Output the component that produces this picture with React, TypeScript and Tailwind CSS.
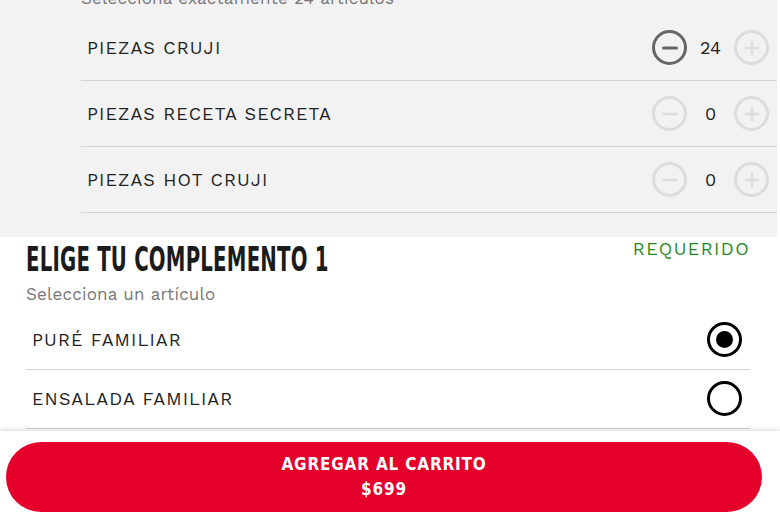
import { Minus, Plus } from "lucide-react";

type Piece = { name: string; qty: number };

const pieces: Piece[] = [
    { name: "PIEZAS CRUJI", qty: 24 },
    { name: "PIEZAS RECETA SECRETA", qty: 0 },
    { name: "PIEZAS HOT CRUJI", qty: 0 },
];

const sides = [
    { name: "PURÉ FAMILIAR", selected: true },
    { name: "ENSALADA FAMILIAR", selected: false },
];

const bodyFont = { fontFamily: '"Work Sans", "Noto Sans", "Open Sans", sans-serif' };
const condensedFont = {
    fontFamily: '"Liberation Sans Narrow", "DejaVu Sans Condensed", sans-serif',
};

function RoundButton({
    kind,
    active,
}: {
    kind: "minus" | "plus";
    active: boolean;
}) {
    const Icon = kind === "minus" ? Minus : Plus;
    return (
        <button
            className={`flex h-[35px] w-[35px] items-center justify-center rounded-full border-[3px] ${
                active
                    ? "border-[#666] text-[#666]"
                    : "border-[#dcdcdc] text-[#dcdcdc]"
            }`}
        >
            <Icon size={22} strokeWidth={active ? 3.5 : 2.5} />
        </button>
    );
}

function Counter({ qty }: { qty: number }) {
    // the total is already reached, so only "minus" is usable on a filled row
    return (
        <div className="flex items-center">
            <RoundButton kind="minus" active={qty > 0} />
            <span className="w-[47px] text-center text-[18px] text-[#222]">
                {qty}
            </span>
            <RoundButton kind="plus" active={false} />
        </div>
    );
}

function Radio({ checked }: { checked: boolean }) {
    return (
        <span className="flex h-[35px] w-[35px] items-center justify-center rounded-full border-[3px] border-black">
            {checked && <span className="h-[17px] w-[17px] rounded-full bg-black" />}
        </span>
    );
}

export default function App() {
    return (
        <div className="relative h-[522px] w-[780px] overflow-hidden bg-white" style={bodyFont}>
            {/* Chicken pieces picker */}
            <section className="mr-[3px] bg-[#f2f2f2] pb-[24px] pl-[81px]">
                <p className="-mt-[12px] text-[17px] leading-[20px] tracking-[0.2px] text-[#777]">
                    Selecciona exactamente 24 artículos
                </p>
                <ul className="mt-[7px]">
                    {pieces.map((p) => (
                        <li
                            key={p.name}
                            className="flex h-[66px] items-center justify-between border-b border-[#d4d4d4] pl-[6px] pr-[8px]"
                        >
                            <span className="text-[18px] tracking-[1.1px] text-[#222]">
                                {p.name}
                            </span>
                            <Counter qty={p.qty} />
                        </li>
                    ))}
                </ul>
            </section>

            {/* Side dish choice */}
            <section className="px-[26px] pr-[30px] pt-[1px]">
                <div className="flex items-start justify-between">
                    <h2
                        className="origin-left scale-x-[0.665] whitespace-nowrap text-[33px] font-bold leading-[44px] tracking-[0.3px] text-[#1b1b1b]"
                        style={condensedFont}
                    >
                        ELIGE TU COMPLEMENTO 1
                    </h2>
                    <span className="-mt-[3px] text-[18px] tracking-[1.4px] text-[#1f8a1f]">
                        REQUERIDO
                    </span>
                </div>
                <p className="text-[17px] tracking-[0.2px] text-[#777]">
                    Selecciona un artículo
                </p>
                <ul className="mt-[3px]">
                    {sides.map((s) => (
                        <li
                            key={s.name}
                            className="flex h-[59px] items-center justify-between border-b border-[#d4d4d4] pl-[6px] pr-[8px]"
                        >
                            <span className="text-[18px] tracking-[1.1px] text-[#222]">
                                {s.name}
                            </span>
                            <Radio checked={s.selected} />
                        </li>
                    ))}
                </ul>
            </section>

            {/* Sticky add-to-cart bar */}
            <div className="absolute bottom-0 left-0 right-0 h-[91px] bg-white shadow-[0_-2px_4px_rgba(0,0,0,0.12)]">
                <button
                    className="ml-[6px] mt-[11px] flex h-[70px] w-[756px] flex-col items-center justify-center rounded-full bg-[#e4002b] text-white"
                    style={condensedFont}
                >
                    <span className="text-[17px] font-bold leading-[25px] tracking-[0.8px]">
                        AGREGAR AL CARRITO
                    </span>
                    <span className="text-[17px] font-bold leading-[25px] tracking-[0.8px]">$699</span>
                </button>
            </div>
        </div>
    );
}
